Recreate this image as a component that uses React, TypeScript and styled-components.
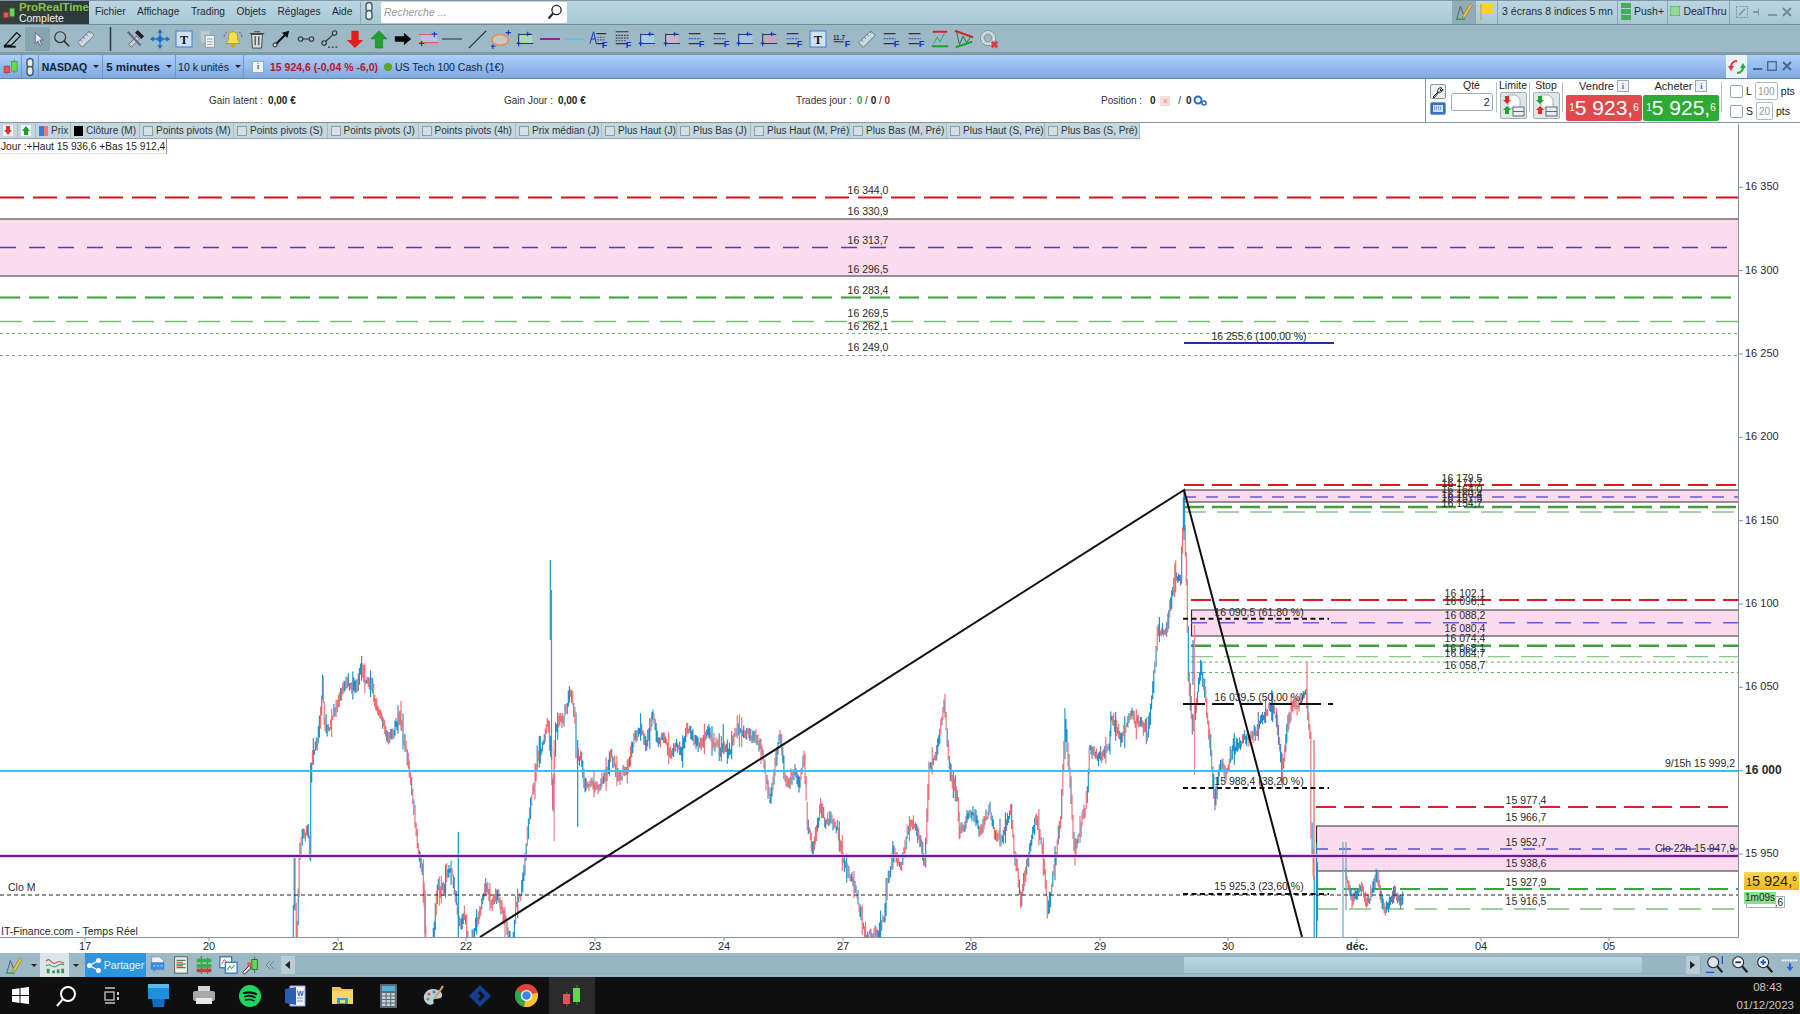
import React, { useMemo } from "react";
import styled, { createGlobalStyle } from "styled-components";

const Global = createGlobalStyle`
  html, body { margin: 0; padding: 0; background: #fff; }
  body { font-family: "Liberation Sans", Arial, sans-serif; font-size: 11px; color: #222; }
`;

const Page = styled.div`
  width: 1800px;
  height: 1014px;
  display: flex;
  flex-direction: column;
  overflow: hidden;
`;

/* ---------- top menu ---------- */
const MenuBar = styled.div`
  height: 24px;
  flex: none;
  display: flex;
  align-items: center;
  background: linear-gradient(#bcd6e1, #a7c7d5);
  border-top: 1px solid #7d98a4;
  box-sizing: border-box;
`;
const Logo = styled.div`
  width: 89px;
  height: 23px;
  flex: none;
  background: linear-gradient(90deg, #3b3f3c, #2c3a3c);
  display: flex;
  align-items: center;
  padding-left: 2px;
  box-sizing: border-box;
  gap: 2px;
`;
const LogoText = styled.div`
  line-height: 11px;
  font-size: 10.5px;
  color: #eef2f2;
  b { display: block; color: #86c440; font-size: 11.5px; font-weight: bold; }
`;
const MenuList = styled.div`
  display: flex;
  margin: -3px 0 0 6px;
  gap: 11.5px;
  width: 265px;
  font-size: 10.2px;
  color: #1f2d33;
`;
const MenuSep = styled.div`
  width: 1px;
  height: 22px;
  background: #8ba6b2;
`;
const SearchBox = styled.div`
  width: 186px;
  height: 21px;
  margin-left: 4px;
  background: #fff;
  border-radius: 2px;
  display: flex;
  align-items: center;
  justify-content: space-between;
  padding: 0 4px 2px 3px;
  box-sizing: border-box;
  font-style: italic;
  color: #999;
  font-size: 10.5px;
`;
const MenuRight = styled.div`
  margin-left: auto;
  display: flex;
  align-items: center;
  height: 23px;
  color: #1f2d33;
  font-size: 10.5px;
`;
const TopCell = styled.div<{ $w: number; $bg?: string; $sep?: boolean }>`
  width: ${(p) => p.$w}px;
  height: 23px;
  flex: none;
  display: flex;
  align-items: center;
  justify-content: center;
  gap: 3px;
  padding-bottom: 3px;
  background: ${(p) => p.$bg || "transparent"};
  border-right: ${(p) => (p.$sep ? "1px solid #8ba6b2" : "none")};
  box-sizing: border-box;
`;
const WinBtns = styled.div`
  display: flex;
  align-items: center;
  gap: 5px;
  padding: 0 8px 2px 6px;
`;

/* ---------- drawing toolbar ---------- */
const ToolBar = styled.div`
  height: 31px;
  flex: none;
  display: flex;
  align-items: center;
  background: #9cb9c5;
  border-top: 1px solid #6f8d9a;
  border-bottom: 3px solid #7f9ba7;
  box-sizing: border-box;
  padding-left: 1px;
`;
const ToolSlot = styled.div<{ $active?: boolean }>`
  width: 24.4px;
  height: 24px;
  flex: none;
  display: flex;
  align-items: center;
  justify-content: center;
  border-radius: 2px;
  background: ${(p) => (p.$active ? "#87a3af" : "transparent")};
`;

/* ---------- instrument bar ---------- */
const InstrumentBar = styled.div`
  height: 24px;
  flex: none;
  display: flex;
  align-items: center;
  background: linear-gradient(#accff9, #7fa8de);
  border-bottom: 1px solid #5c87b6;
  box-sizing: border-box;
  font-size: 10.5px;
`;
const BlueCell = styled.div<{ $w: number; $bold?: boolean; $size?: number }>`
  width: ${(p) => p.$w}px;
  height: 23px;
  flex: none;
  box-sizing: border-box;
  display: flex;
  align-items: center;
  justify-content: center;
  gap: 6px;
  border-right: 1px solid #6d97c8;
  font-weight: ${(p) => (p.$bold ? "bold" : "normal")};
  font-size: ${(p) => p.$size || 10.5}px;
  color: #14233a;
`;
const Caret = styled.span`
  width: 0;
  height: 0;
  border-left: 3.5px solid transparent;
  border-right: 3.5px solid transparent;
  border-top: 3.5px solid #222;
`;
const InfoIcon = styled.span`
  width: 10px;
  height: 10px;
  border: 1px solid #9aa9b5;
  background: #eef2f5;
  color: #567;
  font: bold 8px "Liberation Serif", serif;
  display: inline-flex;
  align-items: center;
  justify-content: center;
`;
const Quote = styled.div`
  display: flex;
  align-items: center;
  margin-left: 8px;
  gap: 6px;
  color: #14233a;
`;
const QuotePrice = styled.span`
  color: #b3182c;
  font-weight: bold;
`;
const LiveDot = styled.span`
  width: 8px;
  height: 8px;
  border-radius: 50%;
  background: #5aa51f;
  margin-right: -3px;
`;
const BlueRight = styled.div`
  margin-left: auto;
  display: flex;
  align-items: center;
  height: 23px;
`;
const RefreshTab = styled.div`
  width: 21px;
  height: 23px;
  background: #eaf1f8;
  display: flex;
  align-items: center;
  justify-content: center;
`;

/* ---------- account row ---------- */
const AccountRow = styled.div`
  height: 44px;
  flex: none;
  display: flex;
  background: #fff;
  border-bottom: 1px solid #83999f;
  box-sizing: border-box;
`;
const Stats = styled.div`
  width: 1425px;
  flex: none;
  display: flex;
  align-items: center;
  padding-left: 209px;
  box-sizing: border-box;
  font-size: 10px;
  color: #333;
`;
const StatCell = styled.div<{ $w: number }>`
  width: ${(p) => p.$w}px;
  flex: none;
  display: flex;
  align-items: center;
  gap: 5px;
  b { color: #222; }
`;
const Tone = styled.b<{ $c: string }>`
  color: ${(p) => p.$c} !important;
`;
const PositionBox = styled.span`
  width: 10px;
  height: 10px;
  background: #fbd9d9;
  color: #e08d8d;
  font-size: 9px;
  line-height: 10px;
  text-align: center;
`;
const GearIcon = styled.svg`
  margin-left: -4px;
`;
const OrderPanel = styled.div`
  flex: 1;
  display: flex;
  border-left: 1px solid #83999f;
  padding-left: 1px;
  box-sizing: border-box;
  font-size: 10.5px;
  line-height: 13px;
`;
const PanelCol = styled.div<{ $w: number; $top?: number }>`
  width: ${(p) => p.$w}px;
  flex: none;
  display: flex;
  flex-direction: column;
  align-items: center;
  padding-top: ${(p) => p.$top || 0}px;
  box-sizing: border-box;
`;
const SmallBtn = styled.div<{ $blue?: boolean }>`
  width: 16px;
  height: ${(p) => (p.$blue ? 13 : 15)}px;
  border: 1px solid #8a9aa4;
  border-radius: 2px;
  background: ${(p) => (p.$blue ? "#3372c9" : "#eef1f2")};
  display: flex;
  align-items: center;
  justify-content: center;
  margin-bottom: 3px;
  box-sizing: border-box;
`;
const QtyInput = styled.div`
  width: 42px;
  height: 18px;
  border: 1px solid #9fb0b9;
  border-radius: 2px;
  text-align: right;
  padding: 2px;
  box-sizing: border-box;
  margin-top: 1px;
`;
const OrderBtn = styled.div`
  width: 27px;
  height: 27px;
  border: 1px solid #9fb0b9;
  border-radius: 2px;
  background: #dfe6e9;
  box-sizing: border-box;
  display: flex;
  align-items: center;
  justify-content: center;
`;
const PanelDivider = styled.div`
  width: 1px;
  height: 30px;
  background: #b5c1c7;
  margin: 3px 2px 0;
  flex: none;
`;
const PriceBtn = styled.div<{ $bg: string }>`
  width: 76px;
  height: 26px;
  border-radius: 2px;
  background: ${(p) => p.$bg};
  color: #fff;
  display: flex;
  align-items: center;
  justify-content: center;
  font-size: 21px;
  line-height: 26px;
  sub { font-size: 10px; vertical-align: -3px; line-height: 0; }
  sup { font-size: 10px; vertical-align: 9px; line-height: 0; }
`;
const PriceLabel = styled.div`
  display: flex;
  align-items: center;
  gap: 3px;
  height: 14px;
  margin-bottom: 2px;
  font-size: 11px;
`;
const StopCol = styled.div`
  display: flex;
  flex-direction: column;
  gap: 2px;
  margin: 3px 0 0 6px;
`;
const StopRow = styled.div`
  display: flex;
  align-items: center;
  gap: 3px;
  height: 18px;
`;
const Check = styled.span`
  width: 11px;
  height: 11px;
  border: 1px solid #9aa7ae;
  border-radius: 2px;
`;
const PtsBox = styled.span<{ $w: number }>`
  width: ${(p) => p.$w}px;
  height: 18px;
  border: 1px solid #adb9bf;
  border-radius: 2px;
  color: #999;
  font-size: 10px;
  display: flex;
  align-items: center;
  justify-content: center;
  box-sizing: border-box;
`;

/* ---------- chart ---------- */
const ChartZone = styled.div`
  flex: 1;
  position: relative;
  background: #fff;
  overflow: hidden;
`;
const ChartSvg = styled.svg`
  display: block;
  width: 1800px;
  height: 830px;
`;
const Lbl = styled.text<{ $size?: number; $bold?: boolean }>`
  font-family: "Liberation Sans", Arial, sans-serif;
  font-size: ${(p) => p.$size || 10.5}px;
  font-weight: ${(p) => (p.$bold ? "bold" : "normal")};
  fill: #2a2a2a;
`;
const LegendBar = styled.div`
  position: absolute;
  left: 0;
  top: 0;
  height: 15px;
  display: flex;
  align-items: stretch;
  background: #c6d6dc;
  border-bottom: 1px solid #93a8b2;
  font-size: 10px;
  color: #2a3a42;
`;
const LegendItem = styled.div<{ $w: number }>`
  width: ${(p) => p.$w}px;
  flex: none;
  box-sizing: border-box;
  display: flex;
  align-items: center;
  gap: 3px;
  padding-left: 3px;
  border-right: 1px solid #a7bac2;
  white-space: nowrap;
  overflow: hidden;
`;
const LegendCheck = styled.span`
  width: 8px;
  height: 8px;
  border: 1px solid #8b9ca6;
  background: #d6e0e4;
  flex: none;
`;
const LegendSwatch = styled.span<{ $bg: string }>`
  width: 9px;
  height: 10px;
  background: ${(p) => p.$bg};
  flex: none;
`;
const DayBox = styled.div`
  position: absolute;
  left: 0;
  top: 16px;
  height: 15px;
  width: 167px;
  line-height: 15px;
  box-sizing: border-box;
  padding-left: 1px;
  background: #fff;
  border-right: 1px solid #8a9ea8;
  border-bottom: 1px solid #d7e0e4;
  font-size: 10.2px;
  white-space: nowrap;
`;
const PriceTag = styled.div`
  position: absolute;
  left: 1744px;
  top: 749px;
  width: 55px;
  height: 18px;
  background: linear-gradient(#f9d64f, #efb618);
  color: #1f1f1f;
  font-size: 14.5px;
  line-height: 18px;
  text-align: center;
  white-space: nowrap;
  sub { font-size: 10px; vertical-align: 0; line-height: 0; }
  sup { font-size: 8px; vertical-align: 5px; line-height: 0; }
`;
const GhostTag = styled.div`
  position: absolute;
  left: 1746px;
  top: 773px;
  width: 39px;
  height: 12px;
  line-height: 12px;
  border: 1px solid #a7b4ba;
  background: #fff;
  box-sizing: border-box;
  font-size: 10px;
  text-align: right;
  padding-right: 1px;
`;
const TimerTag = styled.div`
  position: absolute;
  left: 1744px;
  top: 769px;
  width: 32px;
  height: 12px;
  line-height: 12px;
  background: #8fdc90;
  font-size: 10px;
  text-align: center;
`;

/* ---------- bottom toolbar ---------- */
const BottomBar = styled.div`
  height: 24px;
  flex: none;
  display: flex;
  align-items: center;
  background: #9cb9c5;
`;
const BottomBtn = styled.div<{ $w: number; $bg?: string }>`
  width: ${(p) => p.$w}px;
  height: 24px;
  flex: none;
  display: flex;
  align-items: center;
  justify-content: center;
  background: ${(p) => p.$bg || "transparent"};
`;
const ShareBtn = styled.div`
  width: 61px;
  height: 24px;
  flex: none;
  margin-left: 2px;
  display: flex;
  align-items: center;
  justify-content: center;
  gap: 3px;
  background: #2f94de;
  color: #e8f4fd;
  font-size: 10.5px;
`;
const Scroll = styled.div`
  flex: none;
  width: 1420px;
  height: 18px;
  margin-left: 4px;
  display: flex;
  align-items: center;
  background: #8fabb8;
  border-radius: 2px;
`;
const ScrollArrow = styled.div`
  width: 14px;
  height: 18px;
  flex: none;
  background: #b9cdd6;
  display: flex;
  align-items: center;
  justify-content: center;
`;
const ScrollTrack = styled.div<{ $w: number; $light?: boolean }>`
  width: ${(p) => p.$w}px;
  height: 16px;
  flex: none;
  background: ${(p) => (p.$light ? "linear-gradient(#bad7e3, #a3c4d2)" : "#97b5c2")};
`;
const ZoomGroup = styled.div`
  display: flex;
  margin-left: 1px;
`;

/* ---------- windows taskbar ---------- */
const TaskBar = styled.div`
  height: 37px;
  flex: none;
  display: flex;
  align-items: center;
  background: #0f0f0f;
  padding-left: 0;
`;
const TaskList = styled.div`
  display: flex;
  margin-left: -3px;
`;
const TaskSlot = styled.div<{ $active?: boolean }>`
  width: 46px;
  height: 37px;
  flex: none;
  display: flex;
  align-items: center;
  justify-content: center;
  background: ${(p) => (p.$active ? "#2b2b2b" : "transparent")};
`;
const Clock = styled.div`
  margin-left: auto;
  padding-right: 6px;
  text-align: right;
  color: #c9c9c9;
  font-size: 11.5px;
  line-height: 18px;
  span { display: block; padding-right: 12px; }
`;

/* ---------- icons ---------- */
const Svg = ({ s = 20, children }: { s?: number; children: React.ReactNode }) => (
  <svg width={s} height={s} viewBox="0 0 22 22" fill="none">
    {children}
  </svg>
);

const CandleMark = ({ s = 20 }: { s?: number }) => (
  <Svg s={s}>
    <path d="M6 9v11M15 2v17" stroke="#2f8f2f" strokeWidth="1" />
    <rect x="2.5" y="10" width="7" height="8" fill="#ef4f55" stroke="#a92a30" strokeWidth=".7" />
    <rect x="11.5" y="4" width="7" height="12" fill="#66d84e" stroke="#2f8f2f" strokeWidth=".7" />
  </Svg>
);
const PenChart = () => (
  <Svg>
    <path d="M3 20 7 6l4 10" stroke="#4b5a60" />
    <path d="M9 17 18 3l2 2-8 13z" fill="#f3c43b" stroke="#7c6a22" strokeWidth=".6" />
    <path d="M2 20h10" stroke="#2f9a42" strokeWidth="1.4" />
  </Svg>
);
const Chain = () => (
  <svg width="10" height="20" viewBox="0 0 10 20" fill="none" stroke="#4a5a63" strokeWidth="1.4">
    <rect x="2" y="1.5" width="6" height="9" rx="3" fill="#e6edf0" />
    <rect x="2" y="9.5" width="6" height="9" rx="3" fill="#e6edf0" />
  </svg>
);
const Lens = () => (
  <svg width="16" height="16" viewBox="0 0 16 16" fill="none" stroke="#222" strokeWidth="1.3">
    <circle cx="9.5" cy="6" r="4.6" />
    <path d="M6 9.5 1.5 14.5" strokeWidth="2" />
  </svg>
);
const Levels = ({ small }: { small?: boolean }) => (
  <Svg>
    <path d="M3 5h13M3 16h12" stroke="#333" strokeWidth="1.3" />
    <path d="M3 10.5h13" stroke={small ? "#333" : "#3a55d8"} strokeWidth="1.3" strokeDasharray="2 1" />
    <text x="14" y="20" fontSize="10" fontWeight="bold" fill="#1130d8" fontFamily="Liberation Sans">F</text>
  </Svg>
);
const Box = ({ fill }: { fill: string }) => (
  <Svg>
    <rect x="4" y="6" width="15" height="10" fill={fill} />
    <path d="M4 6h15M2 16h18M4 5v13" stroke="#263a7a" strokeWidth="1.2" />
    <path d="M14 3v5M12 5.5h5M2 15.5h4M4 13v6" stroke="#1130d8" strokeWidth="1.1" />
  </Svg>
);
const Ruler = () => (
  <Svg>
    <path d="M2 15 15 2l5 5L7 20z" fill="#cfdbe0" stroke="#5f7078" strokeWidth="1" />
    <path d="M5 12l2 2M8 9l2 2M11 6l2 2M14 3l2 2" stroke="#5f7078" />
  </Svg>
);
const TextTool = () => (
  <svg width="18" height="18" viewBox="0 0 18 18">
    <rect x="1" y="1" width="16" height="16" fill="#cfe2ee" stroke="#3d7fe0" />
    <text x="9" y="13.5" textAnchor="middle" fontSize="12" fontWeight="bold" fill="#111" fontFamily="Liberation Serif">T</text>
  </svg>
);
const Dots = () => (
  <Svg>
    <text x="1" y="12" fontSize="7" fontWeight="bold" fill="#333" fontFamily="Liberation Sans">11.7</text>
    <path d="M2 14h11" stroke="#333" strokeWidth="1.2" />
    <text x="14" y="20" fontSize="10" fontWeight="bold" fill="#1130d8" fontFamily="Liberation Sans">F</text>
  </Svg>
);

const toolIcons: React.ReactNode[] = [
  <Svg key="pen">
    <path d="M5 15 15 4l4 3.5L9 18H2z" stroke="#111" strokeWidth="1.4" />
    <path d="M1 19.5h13" stroke="#111" strokeWidth="2" />
  </Svg>,
  <Svg key="cur">
    <path d="M8 4v12l3-3 2 5 2-1-2-5h4z" fill="#e3e9ec" stroke="#667" />
  </Svg>,
  <Svg key="zoom">
    <circle cx="9" cy="9" r="6" stroke="#333" strokeWidth="1.3" />
    <path d="m13 13 6 6" stroke="#333" strokeWidth="1.8" />
  </Svg>,
  <Ruler key="ruler" />,
  <svg key="sep" width="3" height="24"><path d="M1.5 0v24" stroke="#283a42" strokeWidth="1.5" /></svg>,
  <Svg key="tools">
    <path d="m4 17 9-9 3 3-9 9z" fill="#c7cfd3" stroke="#555" strokeWidth=".8" />
    <path d="M11 4l3-3 7 7-3 3z" fill="#222" />
    <path d="M3 3l14 15" stroke="#667" strokeWidth="2.2" />
  </Svg>,
  <Svg key="move">
    <path d="M11 2v18M2 11h18" stroke="#1a6fd0" strokeWidth="1.5" />
    <path d="m11 0 3 4H8zM11 22l3-4H8zM0 11l4-3v6zM22 11l-4-3v6z" fill="#1a6fd0" />
    <circle cx="11" cy="11" r="3" fill="#1a6fd0" />
  </Svg>,
  <TextTool key="t" />,
  <Svg key="copy">
    <rect x="3" y="2" width="10" height="13" fill="#bfcad0" />
    <rect x="8" y="7" width="10" height="13" fill="#f0f3f4" stroke="#8a979e" />
    <path d="M10 11h6M10 14h6M10 17h6" stroke="#8a979e" />
  </Svg>,
  <Svg key="bell">
    <path d="M11 3c-4 0-5 3-5 7 0 3-2 4-2 6h14c0-2-2-3-2-6 0-4-1-7-5-7z" fill="#f7e14b" stroke="#9a8b1a" strokeWidth=".8" />
    <circle cx="11" cy="18.5" r="2" fill="#caa21b" />
    <path d="M2 6 1 9M20 6l1 3M4 3 3 5M18 3l1 2" stroke="#566" />
  </Svg>,
  <Svg key="trash">
    <path d="M5 6h12l-1 15H6z" fill="#d5dadc" stroke="#444" strokeWidth="1" />
    <path d="M3 5h16M8 3h6M9 8v10M13 8v10" stroke="#444" strokeWidth="1.3" />
  </Svg>,
  <Svg key="arrow">
    <path d="M5 17 17 5" stroke="#111" strokeWidth="2.2" />
    <path d="m20 2-8 2 6 6z" fill="#111" />
    <circle cx="4.5" cy="17.5" r="2.2" fill="#dde" stroke="#111" />
  </Svg>,
  <Svg key="link">
    <circle cx="5" cy="11" r="2.5" stroke="#333" strokeWidth="1.2" />
    <circle cx="17" cy="11" r="2.5" stroke="#333" strokeWidth="1.2" />
    <path d="M7.5 11h7" stroke="#333" strokeWidth="1.2" />
  </Svg>,
  <Svg key="node">
    <circle cx="4.5" cy="15.5" r="2.5" stroke="#333" strokeWidth="1.2" />
    <circle cx="16" cy="4.5" r="2.5" stroke="#333" strokeWidth="1.2" />
    <path d="M6.5 13.5 14 6.5" stroke="#333" strokeWidth="1.2" />
    <path d="M9 20h11" stroke="#333" strokeWidth="1.5" strokeDasharray="2 2" />
  </Svg>,
  <Svg key="down">
    <path d="M7 2h8v10h5l-9 9-9-9h5z" fill="#e31d1d" />
  </Svg>,
  <Svg key="up">
    <path d="M7 21h8V11h5l-9-9-9 9h5z" fill="#22a02e" stroke="#136b1b" strokeWidth=".5" />
  </Svg>,
  <Svg key="right">
    <path d="M2 8h10V4l8 7-8 7v-4H2z" fill="#0a0a0a" />
  </Svg>,
  <Svg key="chan">
    <rect x="3" y="7" width="18" height="8" fill="#b6c3dc" />
    <path d="M1 6h21M1 15h21" stroke="#e05d5d" strokeWidth="1.2" />
    <path d="M18 3v6M15 5.5h6M4 13v6M1 16h6" stroke="#1130d8" strokeWidth="1.2" />
  </Svg>,
  <Svg key="h"><path d="M0 11h22" stroke="#4a5a62" strokeWidth="1.6" /></Svg>,
  <Svg key="diag"><path d="M2 21 21 2" stroke="#222" strokeWidth="1.2" /></Svg>,
  <Svg key="ell">
    <ellipse cx="10" cy="12" rx="9" ry="6" stroke="#e0925a" strokeWidth="2" fill="#c6c8c0" />
    <path d="M19 1v6M16 4h6M2 17v5M0 19h5" stroke="#1130d8" strokeWidth="1.2" />
  </Svg>,
  <Box key="b1" fill="#a9dab0" />,
  <Svg key="p"><path d="M0 11h22" stroke="#8a13a6" strokeWidth="2" /></Svg>,
  <Svg key="c"><path d="M0 11h22" stroke="#55c4f0" strokeWidth="2" /></Svg>,
  <Svg key="fa">
    <path d="M1 16 5 3l3 13M2 11h5" stroke="#1130d8" strokeWidth="1.1" />
    <path d="M8 5h11M8 16h9" stroke="#333" strokeWidth="1.3" />
    <path d="M9 9h9M9 12h9" stroke="#556" strokeWidth="1.2" strokeDasharray="2 1" />
    <text x="14" y="21" fontSize="10" fontWeight="bold" fill="#1130d8" fontFamily="Liberation Sans">F</text>
  </Svg>,
  <Svg key="fb">
    <path d="M3 3h14M3 16h13" stroke="#333" strokeWidth="1.3" />
    <path d="M3 7h14M3 10h14M3 13h12" stroke="#445" strokeWidth="1.2" strokeDasharray="2 1" />
    <text x="14" y="21" fontSize="10" fontWeight="bold" fill="#1130d8" fontFamily="Liberation Sans">F</text>
  </Svg>,
  <Box key="b2" fill="#a8cdea" />,
  <Box key="b3" fill="#c9b4c9" />,
  <Levels key="l1" />,
  <Levels key="l2" />,
  <Box key="b4" fill="#a9c3e8" />,
  <Box key="b5" fill="#c4aab6" />,
  <Levels key="l3" />,
  <TextTool key="t2" />,
  <Dots key="d" />,
  <Ruler key="r2" />,
  <Levels key="l4" />,
  <Levels key="l5" />,
  <Svg key="rg">
    <path d="M3 3h16" stroke="#d3262a" strokeWidth="2.2" />
    <path d="M2 19h18" stroke="#19a32a" strokeWidth="2.2" />
    <path d="M4 16 8 9l3 5 5-9" stroke="#3f9c5d" strokeWidth="1.1" />
  </Svg>,
  <Svg key="tri">
    <path d="M1 2l20 7" stroke="#d3262a" strokeWidth="2.2" />
    <path d="M2 20l18-6" stroke="#19a32a" strokeWidth="2.2" />
    <path d="M3 4l3 13 4-9 4 7 4-6" stroke="#1f7d3a" strokeWidth="1.1" />
  </Svg>,
  <Svg key="dial">
    <circle cx="10" cy="10" r="8.5" fill="#b4c3ca" stroke="#82959e" strokeWidth="1" />
    <circle cx="10" cy="10" r="6.5" stroke="#dbe3e6" strokeWidth="2.4" strokeDasharray="2 1" />
    <circle cx="10" cy="10" r="4" fill="#9cb9c5" stroke="#82959e" />
    <path d="m14 14 6 6m0-6-6 6" stroke="#e0383c" strokeWidth="3" />
  </Svg>,
];

const Arrow2 = ({ flip }: { flip?: boolean }) => (
  <svg width="24" height="23" viewBox="0 0 24 23">
    <path d="M7 1h8l4 4v9H7z" fill="#fafbfb" stroke="#8a979e" strokeWidth=".7" />
    <rect x="12" y="13" width="11" height="9" fill="#e9edef" stroke="#5e6b73" />
    <path d="M12 17.5h11" stroke="#5e6b73" />
    <path d="M2 2h4v4h2l-4 4-4-4h2z" transform="translate(2 0)" fill={flip ? "#1ea42a" : "#e02a2a"} />
    <path d="M4 21v-4H2l4-4 4 4H8v4z" transform="translate(0 -1)" fill={flip ? "#e02a2a" : "#1ea42a"} />
  </svg>
);

const taskIcons: React.ReactNode[] = [
  <svg key="w" width="17" height="17" viewBox="0 0 17 17" fill="#fff">
    <path d="M0 2.3 7.5 1.2v6.9H0zM8.5 1l8.5-1v8.1H8.5zM0 9h7.5v6.9L0 14.8zM8.5 9H17v8l-8.5-1.1z" />
  </svg>,
  <svg key="s" width="22" height="22" viewBox="0 0 22 22" fill="none" stroke="#fff" strokeWidth="2">
    <circle cx="13" cy="9" r="7" />
    <path d="m8 14-6 7" />
  </svg>,
  <svg key="t" width="16" height="18" viewBox="0 0 16 18" fill="none" stroke="#c7c7c7" strokeWidth="1.3">
    <path d="M1 1h10M1 16h10" strokeWidth="1.6" />
    <rect x="1" y="5" width="9" height="8" />
    <path d="M14 5v3M14 10v3" strokeWidth="2" />
  </svg>,
  <svg key="st" width="21" height="23" viewBox="0 0 21 23">
    <path d="M0 0h21v15H0z" fill="#1d8fdc" />
    <path d="M4 15h13l-1 8H5z" fill="#0f6fc0" />
    <path d="M0 0h21v4H0z" fill="#5cb8ee" />
  </svg>,
  <svg key="pr" width="22" height="19" viewBox="0 0 22 19">
    <rect x="5" y="0" width="12" height="6" fill="#d4d4d4" />
    <rect x="0" y="5" width="22" height="10" rx="2" fill="#a8a8a8" />
    <rect x="3" y="12" width="16" height="6" fill="#e9e9e9" />
  </svg>,
  <svg key="sp" width="22" height="22" viewBox="0 0 22 22" fill="none" stroke="#111" strokeLinecap="round">
    <circle cx="11" cy="11" r="11" fill="#1ed760" stroke="none" />
    <path d="M5 8c4-1 8-1 12 1" strokeWidth="2.2" />
    <path d="M6 11.5c3-1 7-1 10 1" strokeWidth="1.8" />
    <path d="M6.5 15c3-.6 6-.6 8.5.8" strokeWidth="1.5" />
  </svg>,
  <svg key="wd" width="22" height="22" viewBox="0 0 22 22">
    <path d="M5 1h15v20H5z" fill="#eef3fb" stroke="#8fa9d8" />
    <path d="M0 4l11-2v18L0 18z" fill="#2a5db4" />
    <text x="12" y="11" fontSize="7" fontWeight="bold" fill="#2a5db4" fontFamily="Liberation Sans">W</text>
    <path d="M12 13h6M12 16h6" stroke="#6f92cf" />
  </svg>,
  <svg key="f" width="21" height="19" viewBox="0 0 21 19">
    <path d="M0 1h8l2 2h11v15H0z" fill="#f0c24f" />
    <path d="M0 5h21v13H0z" fill="#f7d66d" />
    <rect x="5" y="12" width="11" height="6" fill="#3a9ad9" />
    <rect x="8" y="14" width="5" height="3" fill="#f7d66d" />
  </svg>,
  <svg key="c" width="17" height="24" viewBox="0 0 17 24">
    <rect width="17" height="24" rx="1" fill="#5c6b75" />
    <rect x="2" y="2" width="13" height="5" fill="#4db3d8" />
    {[0, 1, 2, 3].map((r) =>
      [0, 1, 2].map((c) => <rect key={`${r}${c}`} x={2 + c * 4.6} y={9 + r * 3.5} width="3.6" height="2.5" fill="#c5d0d6" />)
    )}
  </svg>,
  <svg key="pa" width="22" height="22" viewBox="0 0 22 22">
    <path d="M10 4C4 4 0 9 1 14c1 5 7 7 9 5 2-2-1-3 1-5 2-1 7 1 8-3 1-4-4-7-9-7z" fill="#bcd0dc" />
    <circle cx="6" cy="9" r="1.6" fill="#e24b4b" />
    <circle cx="11" cy="7" r="1.6" fill="#3a8fd9" />
    <circle cx="5" cy="14" r="1.6" fill="#45b045" />
    <path d="M12 13 20 1" stroke="#d8a24f" strokeWidth="2.2" />
  </svg>,
  <svg key="bl" width="22" height="22" viewBox="0 0 22 22">
    <path d="M11 0 22 11 11 22 0 11z" fill="#123f8f" />
    <path d="M11 6l5 5-5 5-2-2 3-3-3-3z" fill="#0b0f1a" />
  </svg>,
  <svg key="ch" width="23" height="23" viewBox="0 0 23 23">
    <circle cx="11.5" cy="11.5" r="11.5" fill="#e0453a" />
    <path d="M11.5 11.5 1.5 5.8A11.5 11.5 0 0 0 9 22.7z" fill="#2fa74f" />
    <path d="M11.5 11.5 9 22.7A11.5 11.5 0 0 0 22.6 8.5z" fill="#f5c42c" />
    <circle cx="11.5" cy="11.5" r="5.6" fill="#fff" />
    <circle cx="11.5" cy="11.5" r="4.3" fill="#3f86e8" />
  </svg>,
  <svg key="cd" width="20" height="24" viewBox="0 0 20 24">
    <path d="M5 8v14M15 1v20" stroke="#2f8f2f" />
    <rect x="1" y="10" width="7" height="10" fill="#ef4f55" />
    <rect x="11" y="4" width="7" height="14" fill="#61d84c" />
  </svg>,
];

const bottomIcons: React.ReactNode[] = [
  <Svg key="a">
    <path d="M4 2h9l4 4v10H4z" fill="#f0f5fa" stroke="#7793b5" />
    <path d="M3 8h15v8H9l-3 3v-3H3z" fill="#3a8cdc" />
    <path d="M6 12h2M10 12h2M14 12h2" stroke="#fff" />
  </Svg>,
  <Svg key="b">
    <rect x="4" y="2" width="14" height="18" fill="#edf0ee" stroke="#555" />
    <path d="M6 6h10M6 10h10M6 14h10" stroke="#3b8e4a" strokeWidth="1.4" />
    <path d="M6 8h7M6 12h7" stroke="#d63b3b" strokeWidth="1.2" />
  </Svg>,
  <Svg key="c">
    <path d="M8 1v20M15 3v18" stroke="#1f7a29" />
    <path d="M3 4h16v4H3zM3 10h16v4H3z" fill="#33b043" />
    <path d="M3 15h16v4H3z" fill="#d33" />
  </Svg>,
  <Svg key="d">
    <rect x="2" y="2" width="13" height="12" fill="#fff" stroke="#2e6fb5" strokeWidth="1.3" />
    <rect x="8" y="8" width="13" height="12" fill="#eef5fb" stroke="#2e6fb5" strokeWidth="1.3" />
    <path d="m10 17 3-5 2 3 3-4" stroke="#1f8f3a" />
    <path d="m4 10 3-5 3 3" stroke="#d33" />
  </Svg>,
  <Svg key="e">
    <path d="M15 2v18" stroke="#1f7a29" />
    <rect x="12" y="5" width="6" height="11" fill="#66d84e" stroke="#1f7a29" />
    <path d="m2 19 7-7 2 2-7 7z" fill="#f5f5f5" stroke="#111" />
    <path d="M7 8h4v5H7z" fill="#ef4f55" />
  </Svg>,
];

/* ---------- chart data, all in page coordinates ---------- */
const yOf = (p: number) => 770.7 - (p - 16000) * 1.667;

type Pt = [number, number];
const a: Pt[] = ([
  [40, 1240], [45, 980], [52, 1240], [60, 960], [70, 880], [85, 860], [92, 920], [95, 700], [100, 630], [115, 610],
  [125, 500], [130, 410], [135, 530], [145, 570], [165, 540], [178, 500], [195, 460], [215, 420], [235, 400], [248, 370],
  [258, 400], [275, 420], [290, 490], [305, 490], [320, 570], [345, 540], [360, 500], [375, 570], [388, 650], [395, 690],
  [405, 780], [415, 900], [430, 960], [435, 1060], [440, 1240], [460, 1240], [475, 1040], [490, 1060], [510, 1000], [520, 990],
  [535, 1080], [540, 1120], [560, 1110], [570, 1230], [590, 1140], [605, 1090], [620, 1020], [640, 1080], [660, 1060], [675, 1110],
  [690, 1160], [700, 1220], [710, 1060], [725, 1050], [735, 980], [742, 920], [755, 790], [765, 750], [775, 660], [790, 620],
  [805, 580], [815, 640], [820, 800], [830, 550], [855, 500], [875, 430], [888, 500], [892, 620], [905, 620], [915, 700],
  [945, 715], [975, 700], [995, 620], [1020, 680], [1045, 670], [1065, 570], [1085, 530], [1100, 590], [1122, 500], [1135, 570],
  [1160, 570], [1175, 625], [1190, 590], [1205, 640], [1220, 590], [1245, 620], [1270, 640], [1290, 590], [1305, 605], [1330, 610],
  [1345, 630], [1365, 590], [1385, 610], [1400, 600], [1440, 630], [1455, 680], [1470, 780], [1485, 700], [1497, 600],
] as Pt[]).map(([x, y]) => [280 + x / 3, 540 + y / 3]);
const b: Pt[] = ([
  [5, 590], [15, 720], [30, 760], [45, 720], [60, 760], [75, 680], [85, 880], [100, 950], [125, 800], [140, 860],
  [175, 880], [190, 960], [210, 1040], [225, 1060], [240, 1130], [260, 1180], [295, 1160], [315, 1100], [325, 990], [345, 910],
  [365, 950], [385, 850], [410, 830], [425, 880], [437, 960], [450, 650], [470, 620], [495, 470], [505, 600], [520, 720],
  [535, 760], [540, 870], [570, 850], [585, 850], [600, 900], [630, 830], [650, 910], [670, 925], [695, 840], [705, 960],
  [725, 1100], [740, 1020], [770, 860], [790, 930], [805, 1100], [825, 960], [845, 800], [858, 540], [870, 670], [885, 900],
  [900, 870], [912, 800], [925, 740], [930, 630], [965, 630], [990, 600], [995, 500], [1025, 570], [1050, 510], [1075, 540],
  [1105, 590], [1118, 470], [1135, 300], [1160, 310], [1175, 200], [1190, 130], [1205, 130], [1213, -90], [1222, 150], [1228, 440],
  [1240, 600], [1265, 410], [1280, 500], [1295, 640], [1308, 790], [1325, 660], [1345, 690], [1375, 610], [1410, 600], [1460, 530],
  [1490, 520],
] as Pt[]).map(([x, y]) => [780 + x / 3, 540 + y / 3]);
const c: Pt[] = ([
  [305, 40], [320, 210], [340, 60], [372, 15], [378, 5], [388, 120], [391, 420], [396, 560], [400, 1000], [404, 560], [407, 640],
] as Pt[]).map(([x, y]) => [1150 + x / 2.412, 700 + y / 3]);
const d: Pt[] = ([
  [473, 510], [480, 550], [490, 590], [510, 550], [530, 610], [548, 530], [565, 630], [590, 570], [612, 600],
] as Pt[]).map(([x, y]) => [1150 + x / 2.412, 700 + y / 3]);

const wicks: [number, number, number, string][] = [
  [550.3, 560, 640, "#1a93cc"],
  [551.5, 590, 760, "#7d7fa6"],
  [554.2, 740, 841, "#ef8488"],
  [577.7, 740, 827, "#1a93cc"],
  [458.3, 832, 937, "#1a93cc"],
  [425, 890, 937, "#ef7478"],
  [723.3, 724, 746, "#1a93cc"],
  [1184, 491, 540, "#1a93cc"],
  [1194.5, 625, 775, "#ef8a8e"],
  [1193, 640, 685, "#1a93cc"],
  [1343, 842, 937, "#5ab3d6"],
  [1346, 842, 910, "#7d9fc0"],
  [1316.5, 843, 937, "#1a93cc"],
  [1307, 662, 705, "#ef7478"],
  [1314, 740, 880, "#ef5c60"],
];

const buildBars = (series: Pt[][]) => {
  let seed = 7;
  const rnd = () => {
    seed = (seed * 16807) % 2147483647;
    return seed / 2147483647;
  };
  let blue = "";
  let red = "";
  let grey = "";
  series.forEach((pts, idx) => {
    const span = idx === 0 ? 11 : 4;
    let walk = 0;
    for (let i = 0; i < pts.length - 1; i++) {
      const [x0, y0] = pts[i];
      const [x1, y1] = pts[i + 1];
      const n = Math.max(1, Math.round((x1 - x0) / 1.05));
      for (let k = 0; k < n; k++) {
        walk = Math.max(-span, Math.min(span, walk + (rnd() - 0.5) * 9));
        const ya = y0 + ((y1 - y0) * k) / n + walk;
        const yb = y0 + ((y1 - y0) * (k + 1)) / n + walk + (rnd() - 0.5) * 5;
        const x = (x0 + ((x1 - x0) * k) / n).toFixed(1);
        const wick = idx === 0 && rnd() < 0.08 ? 9 : 0;
        const top = Math.min(ya, yb) - rnd() * 6 - 1 - wick;
        const bot = Math.max(ya, yb) + rnd() * 6 + 1 + wick;
        const seg = `M${x} ${Math.max(top, 491).toFixed(1)}V${bot.toFixed(1)}`;
        const r = rnd();
        if (r < 0.14) grey += seg;
        else if (yb > ya === r < 0.68) red += seg;
        else blue += seg;
      }
    }
  });
  return { blue, red, grey };
};

type Lvl = { y: number; x: number; end?: number; c: string; w: number; dash?: string };
const levels: Lvl[] = [
  { y: 197.5, x: 0, c: "#d3161c", w: 2, dash: "24 9" },
  { y: 247.5, x: 0, c: "#4a3fc0", w: 1.3, dash: "16 13" },
  { y: 297.5, x: 0, c: "#3d9c3d", w: 2, dash: "20 9" },
  { y: 321.5, x: 0, c: "#79bb79", w: 1.4, dash: "22 11" },
  { y: 333.5, x: 0, c: "#66ad66", w: 1, dash: "3 3" },
  { y: 355.5, x: 0, c: "#66ad66", w: 1, dash: "3 3" },
  { y: 485, x: 1184, c: "#e0191f", w: 2.2, dash: "20 8" },
  { y: 497, x: 1184, c: "#6a5bd0", w: 1.6, dash: "12 10" },
  { y: 507, x: 1184, c: "#3f9e3f", w: 2.4, dash: "20 8" },
  { y: 512, x: 1184, c: "#8cc58c", w: 1.3, dash: "22 11" },
  { y: 600, x: 1191, c: "#e0191f", w: 2.2, dash: "20 8" },
  { y: 622.7, x: 1191, c: "#6a5bd0", w: 1.6, dash: "16 12" },
  { y: 645.7, x: 1191, c: "#3f9e3f", w: 2.4, dash: "20 8" },
  { y: 656.7, x: 1191, c: "#8cc58c", w: 1.3, dash: "22 11" },
  { y: 662, x: 1191, c: "#66ad66", w: 1, dash: "3 3" },
  { y: 672.5, x: 1191, c: "#66ad66", w: 1, dash: "3 3" },
  { y: 807, x: 1316, end: 1730, c: "#c8292d", w: 2.2, dash: "20 8" },
  { y: 849, x: 1316, c: "#5550c8", w: 1.3, dash: "12 11" },
  { y: 889, x: 1316, c: "#39a83b", w: 2, dash: "20 8" },
  { y: 909, x: 1316, c: "#7cc07c", w: 1.3, dash: "22 11" },
];
const bands: [number, number, number][] = [
  [0, 219, 276],
  [1184, 490, 502],
  [1191, 610, 636],
  [1316, 826, 871],
];
const fibs: [number, string, number, number][] = [
  [618.7, "5 3.5", 612, 1329],
  [704, "22 7", 697, 1333],
  [788, "5 3.5", 781, 1329],
  [894, "5 3.5", 886, 1329],
];
const fibText = ["16 090,5 (61,80 %)", "16 039,5 (50,00 %)", "15 988,4 (38,20 %)", "15 925,3 (23,60 %)"];

const chartLabels: [number, number, string][] = [
  [868, 194, "16 344,0"], [868, 215, "16 330,9"], [868, 244, "16 313,7"], [868, 273, "16 296,5"],
  [868, 294, "16 283,4"], [868, 317, "16 269,5"], [868, 330, "16 262,1"], [868, 351, "16 249,0"],
  [1462, 482, "16 179,5"], [1462, 487, "16 171,7"], [1462, 493, "16 164,0"], [1462, 498, "16 160,4"],
  [1462, 502, "16 157,5"], [1462, 507, "16 154,7"],
  [1465, 597, "16 102,1"], [1465, 605, "16 096,1"], [1465, 619, "16 088,2"], [1465, 632, "16 080,4"],
  [1465, 642, "16 074,4"], [1465, 652, "16 068,1"], [1465, 657, "16 064,7"], [1465, 669, "16 058,7"],
  [1526, 804, "15 977,4"], [1526, 821, "15 966,7"], [1526, 846, "15 952,7"], [1526, 867, "15 938,6"],
  [1526, 886, "15 927,9"], [1526, 905, "15 916,5"],
];
const priceTicks = [16350, 16300, 16250, 16200, 16150, 16100, 16050, 16000, 15950];
const fmtPrice = (p: number) => `${Math.floor(p / 1000)} ${String(p % 1000).padStart(3, "0")}`;
const timeTicks: [number, string, boolean?][] = [
  [85, "17"], [209, "20"], [338, "21"], [466, "22"], [595, "23"], [724, "24"], [843, "27"],
  [971, "28"], [1100, "29"], [1228, "30"], [1357, "déc.", true], [1481, "04"], [1609, "05"],
];

const Chart = () => {
  const bars = useMemo(() => buildBars([[...a, ...b, ...c], d]), []);
  return (
    <ChartSvg viewBox="0 123 1800 830">
      <defs>
        <clipPath id="plot">
          <rect x="0" y="123" width="1738" height="814" />
        </clipPath>
      </defs>
      <g clipPath="url(#plot)">
        {bands.map(([x, t, bt]) => (
          <g key={t}>
            <rect x={x} y={t} width={1738 - x} height={bt - t} fill="#fbdcee" />
            <path d={`M${x} ${t}H1738M${x} ${bt}H1738`} stroke="#2f2f2f" strokeWidth="1.2" />
            {x > 0 && <path d={`M${x + 0.5} ${t}V${bt}`} stroke="#2f2f2f" strokeWidth="1.2" />}
          </g>
        ))}
        {levels.map((l) => (
          <path
            key={`${l.y}`}
            d={`M${l.x} ${l.y}H${l.end || 1738}`}
            stroke={l.c}
            strokeWidth={l.w}
            strokeDasharray={l.dash}
          />
        ))}
        <path d={bars.blue} stroke="#1a93cc" strokeWidth="1.15" />
        <path d={bars.red} stroke="#ef6f74" strokeWidth="1.15" />
        <path d={bars.grey} stroke="#7578a6" strokeWidth="1.15" />
        {wicks.map(([x, y1, y2, col]) => (
          <path key={`${x}${y1}`} d={`M${x} ${y1}V${y2}`} stroke={col} strokeWidth="1.2" />
        ))}
        <path d="M0 771H1738" stroke="#3fbcf5" strokeWidth="2" />
        <path d="M0 856H1738" stroke="#e2b4f0" strokeWidth="3.4" />
        <path d="M0 856H1738" stroke="#701a96" strokeWidth="1.8" />
        <path d="M0 895H1738" stroke="#222" strokeWidth="1" strokeDasharray="4 3" />
        <path d="M1184 343H1334" stroke="#2b2bb0" strokeWidth="2" />
        {fibs.map(([y, dash, , end]) => (
          <path key={y} d={`M1183 ${y}H${end}`} stroke="#111" strokeWidth="2" strokeDasharray={dash} />
        ))}
        <path d="M480 937 1184 490 1302 937" stroke="#111" strokeWidth="2" fill="none" />
      </g>
      {chartLabels.map(([x, y, t]) => (
        <Lbl key={t} x={x} y={y} textAnchor="middle">{t}</Lbl>
      ))}
      <Lbl x={1259} y={340} textAnchor="middle">16 255,6 (100,00 %)</Lbl>
      {fibs.map(([y, , ty], i) => (
        <Lbl key={y} x={1259} y={ty + 4} textAnchor="middle">{fibText[i]}</Lbl>
      ))}
      <Lbl x={1735} y={767} textAnchor="end">9/15h 15 999,2</Lbl>
      <Lbl x={1735} y={852} textAnchor="end">Clo 22h 15 947,9</Lbl>
      <Lbl x={8} y={891}>Clo M</Lbl>
      <Lbl x={1} y={935}>IT-Finance.com - Temps Réel</Lbl>

      <path d="M1738.5 124V937.5H0" stroke="#7f949d" strokeWidth="1" fill="none" />
      {priceTicks.map((p) => {
        const y = yOf(p);
        const big = p === 16000;
        return (
          <g key={p}>
            <path d={`M1739 ${y}h4`} stroke="#7f949d" />
            <Lbl x={1745} y={y + 3} $size={big ? 12 : 11} $bold={big}>{fmtPrice(p)}</Lbl>
          </g>
        );
      })}
      {timeTicks.map(([x, t, strong]) => (
        <g key={t}>
          <path d={`M${x} 938v3`} stroke="#7f949d" />
          <Lbl x={x} y={950} textAnchor="middle" $size={11} $bold={strong}>{t}</Lbl>
        </g>
      ))}
    </ChartSvg>
  );
};

const legend: [string, number][] = [
  ["Points pivots (M)", 94],
  ["Points pivots (S)", 93.6],
  ["Points pivots (J)", 91],
  ["Points pivots (4h)", 97.4],
  ["Prix médian (J)", 86],
  ["Plus Haut (J)", 75],
  ["Plus Bas (J)", 74],
  ["Plus Haut (M, Pré)", 99],
  ["Plus Bas (M, Pré)", 97],
  ["Plus Haut (S, Pré)", 98],
  ["Plus Bas (S, Pré)", 95],
];

export default function App() {
  return (
    <Page>
      <Global />
      <MenuBar>
        <Logo>
          <CandleMark s={18} />
          <LogoText>
            <b>ProRealTime</b>
            Complete
          </LogoText>
        </Logo>
        <MenuList>
          <span>Fichier</span>
          <span>Affichage</span>
          <span>Trading</span>
          <span>Objets</span>
          <span>Réglages</span>
          <span>Aide</span>
        </MenuList>
        <MenuSep />
        <TopCell $w={16}><Chain /></TopCell>
        <SearchBox>
          Recherche ...
          <Lens />
        </SearchBox>
        <MenuRight>
          <TopCell $w={24} $bg="#90acb8" $sep><PenChart /></TopCell>
          <TopCell $w={22} $sep>
            <svg width="16" height="17" viewBox="0 0 16 17">
              <path d="M2 1h13l-2 5 2 5H2z" fill="#fcd21f" />
              <path d="M2 1v16" stroke="#bda13a" />
            </svg>
          </TopCell>
          <TopCell $w={120} $sep>3 écrans 8 indices 5 mn</TopCell>
          <TopCell $w={50} $sep>
            <svg width="10" height="17" viewBox="0 0 10 17">
              <path d="M0 0h10v5H0zM0 6h10v5H0zM0 12h10v5H0z" fill="#43ae5a" />
            </svg>
            Push+
          </TopCell>
          <TopCell $w={62} $sep>
            <svg width="10" height="10" viewBox="0 0 10 10"><rect width="10" height="10" fill="#8fdb8f" stroke="#5a9c68" /></svg>
            DealThru
          </TopCell>
          <WinBtns>
            <svg width="12" height="12" viewBox="0 0 12 12" fill="none" stroke="#7e98a4">
              <rect x=".5" y=".5" width="11" height="11" strokeDasharray="2 1" />
              <path d="m3 9 6-6" strokeWidth="1.6" />
            </svg>
            <svg width="10" height="8" viewBox="0 0 10 8" fill="#7e98a4"><path d="M0 3h5V0l1 1v6L5 8V5H0z" /></svg>
            <svg width="9" height="9" viewBox="0 0 9 9" fill="#7e98a4"><path d="M0 7h9v2H0z" /></svg>
            <svg width="10" height="10" viewBox="0 0 10 10" stroke="#6f8a96" strokeWidth="1.8"><path d="m1 1 8 8m0-8-8 8" /></svg>
          </WinBtns>
        </MenuRight>
      </MenuBar>

      <ToolBar>
        {toolIcons.map((icon, i) => (
          <ToolSlot key={i} $active={i === 1}>{icon}</ToolSlot>
        ))}
      </ToolBar>

      <InstrumentBar>
        <BlueCell $w={22}><CandleMark s={18} /></BlueCell>
        <BlueCell $w={17}><Chain /></BlueCell>
        <BlueCell $w={64} $bold>NASDAQ <Caret /></BlueCell>
        <BlueCell $w={73} $bold $size={11.5}>5 minutes <Caret /></BlueCell>
        <BlueCell $w={68}>10 k unités <Caret /></BlueCell>
        <Quote>
          <InfoIcon>i</InfoIcon>
          <QuotePrice>15 924,6 (-0,04 % -6,0)</QuotePrice>
          <LiveDot />
          <span>US Tech 100 Cash (1€)</span>
        </Quote>
        <BlueRight>
          <RefreshTab>
            <svg width="18" height="18" viewBox="0 0 18 18" fill="none" strokeWidth="2.2">
              <path d="M9 3C5 3 3 6 3 9" stroke="#e83434" />
              <path d="M0 8h6l-3 5z" fill="#e83434" />
              <path d="M9 15c4 0 6-3 6-6" stroke="#2aa83a" />
              <path d="M18 10h-6l3-5z" fill="#2aa83a" />
            </svg>
          </RefreshTab>
          <WinBtns>
            <svg width="9" height="9" viewBox="0 0 9 9" fill="#47668a"><path d="M0 7h9v2H0z" /></svg>
            <svg width="10" height="10" viewBox="0 0 10 10" fill="none" stroke="#47668a" strokeWidth="1.3"><rect x=".7" y=".7" width="8.6" height="8.6" /></svg>
            <svg width="10" height="10" viewBox="0 0 10 10" stroke="#47668a" strokeWidth="1.8"><path d="m1 1 8 8m0-8-8 8" /></svg>
          </WinBtns>
        </BlueRight>
      </InstrumentBar>

      <AccountRow>
        <Stats>
          <StatCell $w={295}>Gain latent : <b>0,00 €</b></StatCell>
          <StatCell $w={292}>Gain Jour : <b>0,00 €</b></StatCell>
          <StatCell $w={305}>
            Trades jour : <span><Tone $c="#3aa63a">0</Tone> / <b>0</b> / <Tone $c="#b3261e">0</Tone></span>
          </StatCell>
          <StatCell $w={200}>
            Position : <b>&nbsp;0</b><PositionBox>×</PositionBox>&nbsp;/ <b>0</b>
            <GearIcon width="14" height="11" viewBox="0 0 14 11">
              <circle cx="5" cy="5" r="3.5" fill="none" stroke="#2c6fc0" strokeWidth="2" />
              <circle cx="11" cy="8" r="2" fill="none" stroke="#2c6fc0" strokeWidth="1.6" />
            </GearIcon>
          </StatCell>
        </Stats>
        <OrderPanel>
          <PanelCol $w={22} $top={5}>
            <SmallBtn>
              <svg width="12" height="12" viewBox="0 0 12 12" fill="none" stroke="#222"><path d="M1 11 6 6a3 3 0 0 1 4-4L8 4l1 1 2-2a3 3 0 0 1-4 3l-5 6z" /></svg>
            </SmallBtn>
            <SmallBtn $blue>
              <svg width="12" height="9" viewBox="0 0 12 9"><path d="M1 1h10v7H1z" fill="#cfe0f6" /><path d="M2 3h8M2 5h8" stroke="#3372c9" strokeDasharray="1 1" /></svg>
            </SmallBtn>
          </PanelCol>
          <PanelCol $w={45}>
            Qté
            <QtyInput>2</QtyInput>
          </PanelCol>
          <PanelDivider />
          <PanelCol $w={28}>
            Limite
            <OrderBtn><Arrow2 /></OrderBtn>
          </PanelCol>
          <PanelDivider />
          <PanelCol $w={28}>
            Stop
            <OrderBtn><Arrow2 flip /></OrderBtn>
          </PanelCol>
          <PanelDivider />
          <PanelCol $w={78}>
            <PriceLabel>Vendre <InfoIcon>i</InfoIcon></PriceLabel>
            <PriceBtn $bg="#e04a4d"><sub>1</sub>5 923,<sup>6</sup></PriceBtn>
          </PanelCol>
          <PanelCol $w={76}>
            <PriceLabel>Acheter <InfoIcon>i</InfoIcon></PriceLabel>
            <PriceBtn $bg="#2eaa36"><sub>1</sub>5 925,<sup>6</sup></PriceBtn>
          </PanelCol>
          <PanelDivider />
          <StopCol>
            <StopRow><Check />L<PtsBox $w={23}>100</PtsBox>pts</StopRow>
            <StopRow><Check />S<PtsBox $w={17}>20</PtsBox>pts</StopRow>
          </StopCol>
        </OrderPanel>
      </AccountRow>

      <ChartZone>
        <Chart />
        <LegendBar>
          <LegendItem $w={18}>
            <svg width="10" height="11" viewBox="0 0 10 11"><rect width="10" height="11" fill="#f2f5f6" /><path d="M3 1h4v4h2l-4 5-4-5h2z" fill="#e52f2f" /></svg>
          </LegendItem>
          <LegendItem $w={18}>
            <svg width="10" height="11" viewBox="0 0 10 11"><rect width="10" height="11" fill="#f2f5f6" /><path d="M3 10h4V6h2L5 1 1 6h2z" fill="#22a02e" /></svg>
          </LegendItem>
          <LegendItem $w={35}><LegendSwatch $bg="linear-gradient(90deg,#2f7fe0 50%,#f07a70 50%)" />Prix</LegendItem>
          <LegendItem $w={69}><LegendSwatch $bg="#000" />Clôture (M)</LegendItem>
          {legend.map(([t, w]) => (
            <LegendItem key={t} $w={w}><LegendCheck />{t}</LegendItem>
          ))}
        </LegendBar>
        <DayBox>Jour :+Haut 15 936,6 +Bas 15 912,4</DayBox>
        <GhostTag>,6</GhostTag>
        <PriceTag><sub>1</sub>5 924,<sup>6</sup></PriceTag>
        <TimerTag>1m09s</TimerTag>
      </ChartZone>

      <BottomBar>
        <BottomBtn $w={27}><PenChart /></BottomBtn>
        <BottomBtn $w={13}><Caret /></BottomBtn>
        <BottomBtn $w={29} $bg="#dbe6ea">
          <Svg>
            <path d="M1 7c4-6 6 4 10 2s5-3 10 0" stroke="#d85050" strokeWidth="1.2" />
            <path d="M1 12c4-4 7 2 10 1s6-5 10-2" stroke="#35a54a" strokeWidth="1.2" />
            <path d="M2 15h3v5H2zM8 17h3v3H8zM13 16h3v4h-3zM18 15h3v5h-3z" fill="#2f9a42" />
          </Svg>
        </BottomBtn>
        <BottomBtn $w={14}><Caret /></BottomBtn>
        <ShareBtn>
          <svg width="14" height="15" viewBox="0 0 14 15" fill="#fff">
            <circle cx="2.5" cy="7.5" r="2.5" />
            <circle cx="11.5" cy="2.5" r="2.5" />
            <circle cx="11.5" cy="12.5" r="2.5" />
            <path d="M2.5 7.5 11.5 2.5M2.5 7.5l9 5" stroke="#fff" strokeWidth="1.2" />
          </svg>
          Partager
        </ShareBtn>
        {bottomIcons.map((icon, i) => (
          <BottomBtn key={i} $w={23.4}>{icon}</BottomBtn>
        ))}
        <BottomBtn $w={14}>
          <svg width="10" height="10" viewBox="0 0 10 10" fill="none" stroke="#6f8793"><path d="M5 1 1 5l4 4M9 1 5 5l4 4" /></svg>
        </BottomBtn>
        <Scroll>
          <ScrollArrow><svg width="5" height="8" viewBox="0 0 5 8"><path d="M5 0v8L0 4z" fill="#222" /></svg></ScrollArrow>
          <ScrollTrack $w={889} />
          <ScrollTrack $w={458} $light />
          <ScrollTrack $w={44} />
          <ScrollArrow><svg width="5" height="8" viewBox="0 0 5 8"><path d="M0 0v8l5-4z" fill="#222" /></svg></ScrollArrow>
        </Scroll>
        <ZoomGroup>
          <BottomBtn $w={26}>
            <Svg>
              <circle cx="9" cy="8" r="6" fill="#dfe6ea" stroke="#222" strokeWidth="1.2" />
              <path d="m13 12 6 7" stroke="#222" strokeWidth="2.4" />
              <path d="M19 1v9M1 19h9" stroke="#1c54d0" strokeWidth="1.4" />
            </Svg>
          </BottomBtn>
          <BottomBtn $w={25}>
            <Svg>
              <circle cx="9" cy="8" r="6" fill="#eef2f4" stroke="#222" strokeWidth="1.2" />
              <path d="m13 12 6 7" stroke="#222" strokeWidth="2.4" />
              <path d="M6 8h6" stroke="#2a2a7a" strokeWidth="2" />
            </Svg>
          </BottomBtn>
          <BottomBtn $w={25}>
            <Svg>
              <circle cx="9" cy="8" r="6" fill="#eef2f4" stroke="#222" strokeWidth="1.2" />
              <path d="m13 12 6 7" stroke="#222" strokeWidth="2.4" />
              <path d="M6 8h6M9 5v6" stroke="#1c54d0" strokeWidth="2" />
            </Svg>
          </BottomBtn>
          <BottomBtn $w={25}>
            <Svg>
              <path d="M2 6h18" stroke="#fff" strokeWidth="2" strokeDasharray="2 1" />
              <path d="M11 9v6" stroke="#1c6fd0" strokeWidth="2.2" />
              <path d="m7 13 4 5 4-5z" fill="#1c6fd0" />
            </Svg>
          </BottomBtn>
        </ZoomGroup>
      </BottomBar>

      <TaskBar>
        <TaskList>
          {taskIcons.map((icon, i) => (
            <TaskSlot key={i} $active={i === 12}>{icon}</TaskSlot>
          ))}
        </TaskList>
        <Clock>
          <span>08:43</span>
          01/12/2023
        </Clock>
      </TaskBar>
    </Page>
  );
}
